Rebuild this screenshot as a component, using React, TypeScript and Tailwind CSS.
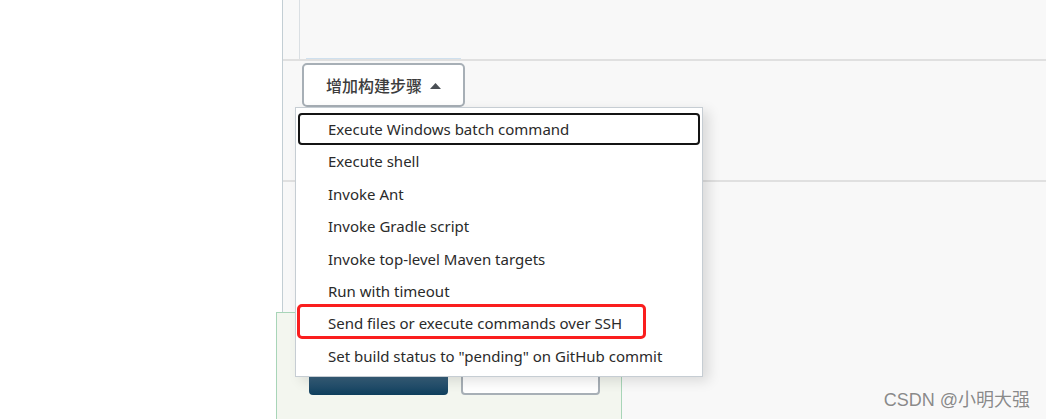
const items = [
  "Execute Windows batch command",
  "Execute shell",
  "Invoke Ant",
  "Invoke Gradle script",
  "Invoke top-level Maven targets",
  "Run with timeout",
  "Send files or execute commands over SSH",
  'Set build status to "pending" on GitHub commit',
];

export default function App() {
  return (
    <div className="flex h-[419px] w-[1046px] overflow-hidden bg-white font-['Noto_Sans','Noto_Sans_CJK_SC',sans-serif]">
      <div className="w-[282px] shrink-0 bg-white" />
      <div className="relative flex flex-1 flex-col border-l border-[#c3ced4] bg-[#f8f8f8]">
        <div className="h-[61px] shrink-0 border-b-2 border-[#e0e0e0]">
          <div className="ml-[16px] h-full border-l border-[#dadfe3]">
            <div className="ml-[6px] h-full w-[155px] border-b border-[#cfe0ee]" />
          </div>
        </div>

        <div className="h-[121px] shrink-0 border-b-2 border-[#e0e0e0] pl-[19px] pt-[2px]">
          <button className="flex h-[44px] w-[163px] items-center justify-center gap-[8px] rounded-[5px] border-2 border-[#a7afb6] bg-white text-[16px] font-medium text-[#3c3c3c]">
            <span className="font-['Noto_Sans_CJK_SC',sans-serif]">增加构建步骤</span>
            <svg width="11" height="6" viewBox="0 0 11 6" className="mt-[1px]">
              <path d="M0 6 L5.5 0 L11 6 Z" fill="#4a4f55" />
            </svg>
          </button>
        </div>

        <div className="mt-[130px] -ml-[7px] flex h-[160px] w-[346px] shrink-0 gap-[13px] border border-[#a8d5b8] bg-[#f3f6ef] pl-[32px] pt-[48px]">
          <div className="h-[34px] w-[139px] rounded-[4px] bg-gradient-to-b from-[#5a7f98] to-[#0d3e5c]" />
          <div className="h-[34px] w-[139px] rounded-[4px] border-2 border-[#a7afb6] bg-white" />
        </div>

        <div className="absolute left-[12px] top-[107px] flex h-[270px] w-[408px] flex-col border border-[#c6cdd3] bg-white pt-[5px] shadow-[6px_4px_12px_rgba(0,0,0,0.12)]">
          {items.map((t, i) => (
            <div
              key={t}
              className={
                "mx-[2px] flex h-[32.4px] shrink-0 items-center pl-[28px] text-[15px] text-[#2a2a2a] " +
                (i === 0 ? "rounded-[4px] border-2 border-[#141414] pl-[26px]" : "border-2 border-transparent")
              }
            >
              {t}
            </div>
          ))}
        </div>

        <div className="absolute left-[14px] top-[304px] h-[35px] w-[349px] rounded-[5px] border-[3px] border-[#fa1e1e]" />

        <div className="absolute right-[16px] top-[387px] text-[18px] text-[#8a8a8a] [text-shadow:0_0_2px_#fff] font-['Liberation_Sans','Noto_Sans_CJK_SC',sans-serif]">
          CSDN @小明大强
        </div>
      </div>
    </div>
  );
}
